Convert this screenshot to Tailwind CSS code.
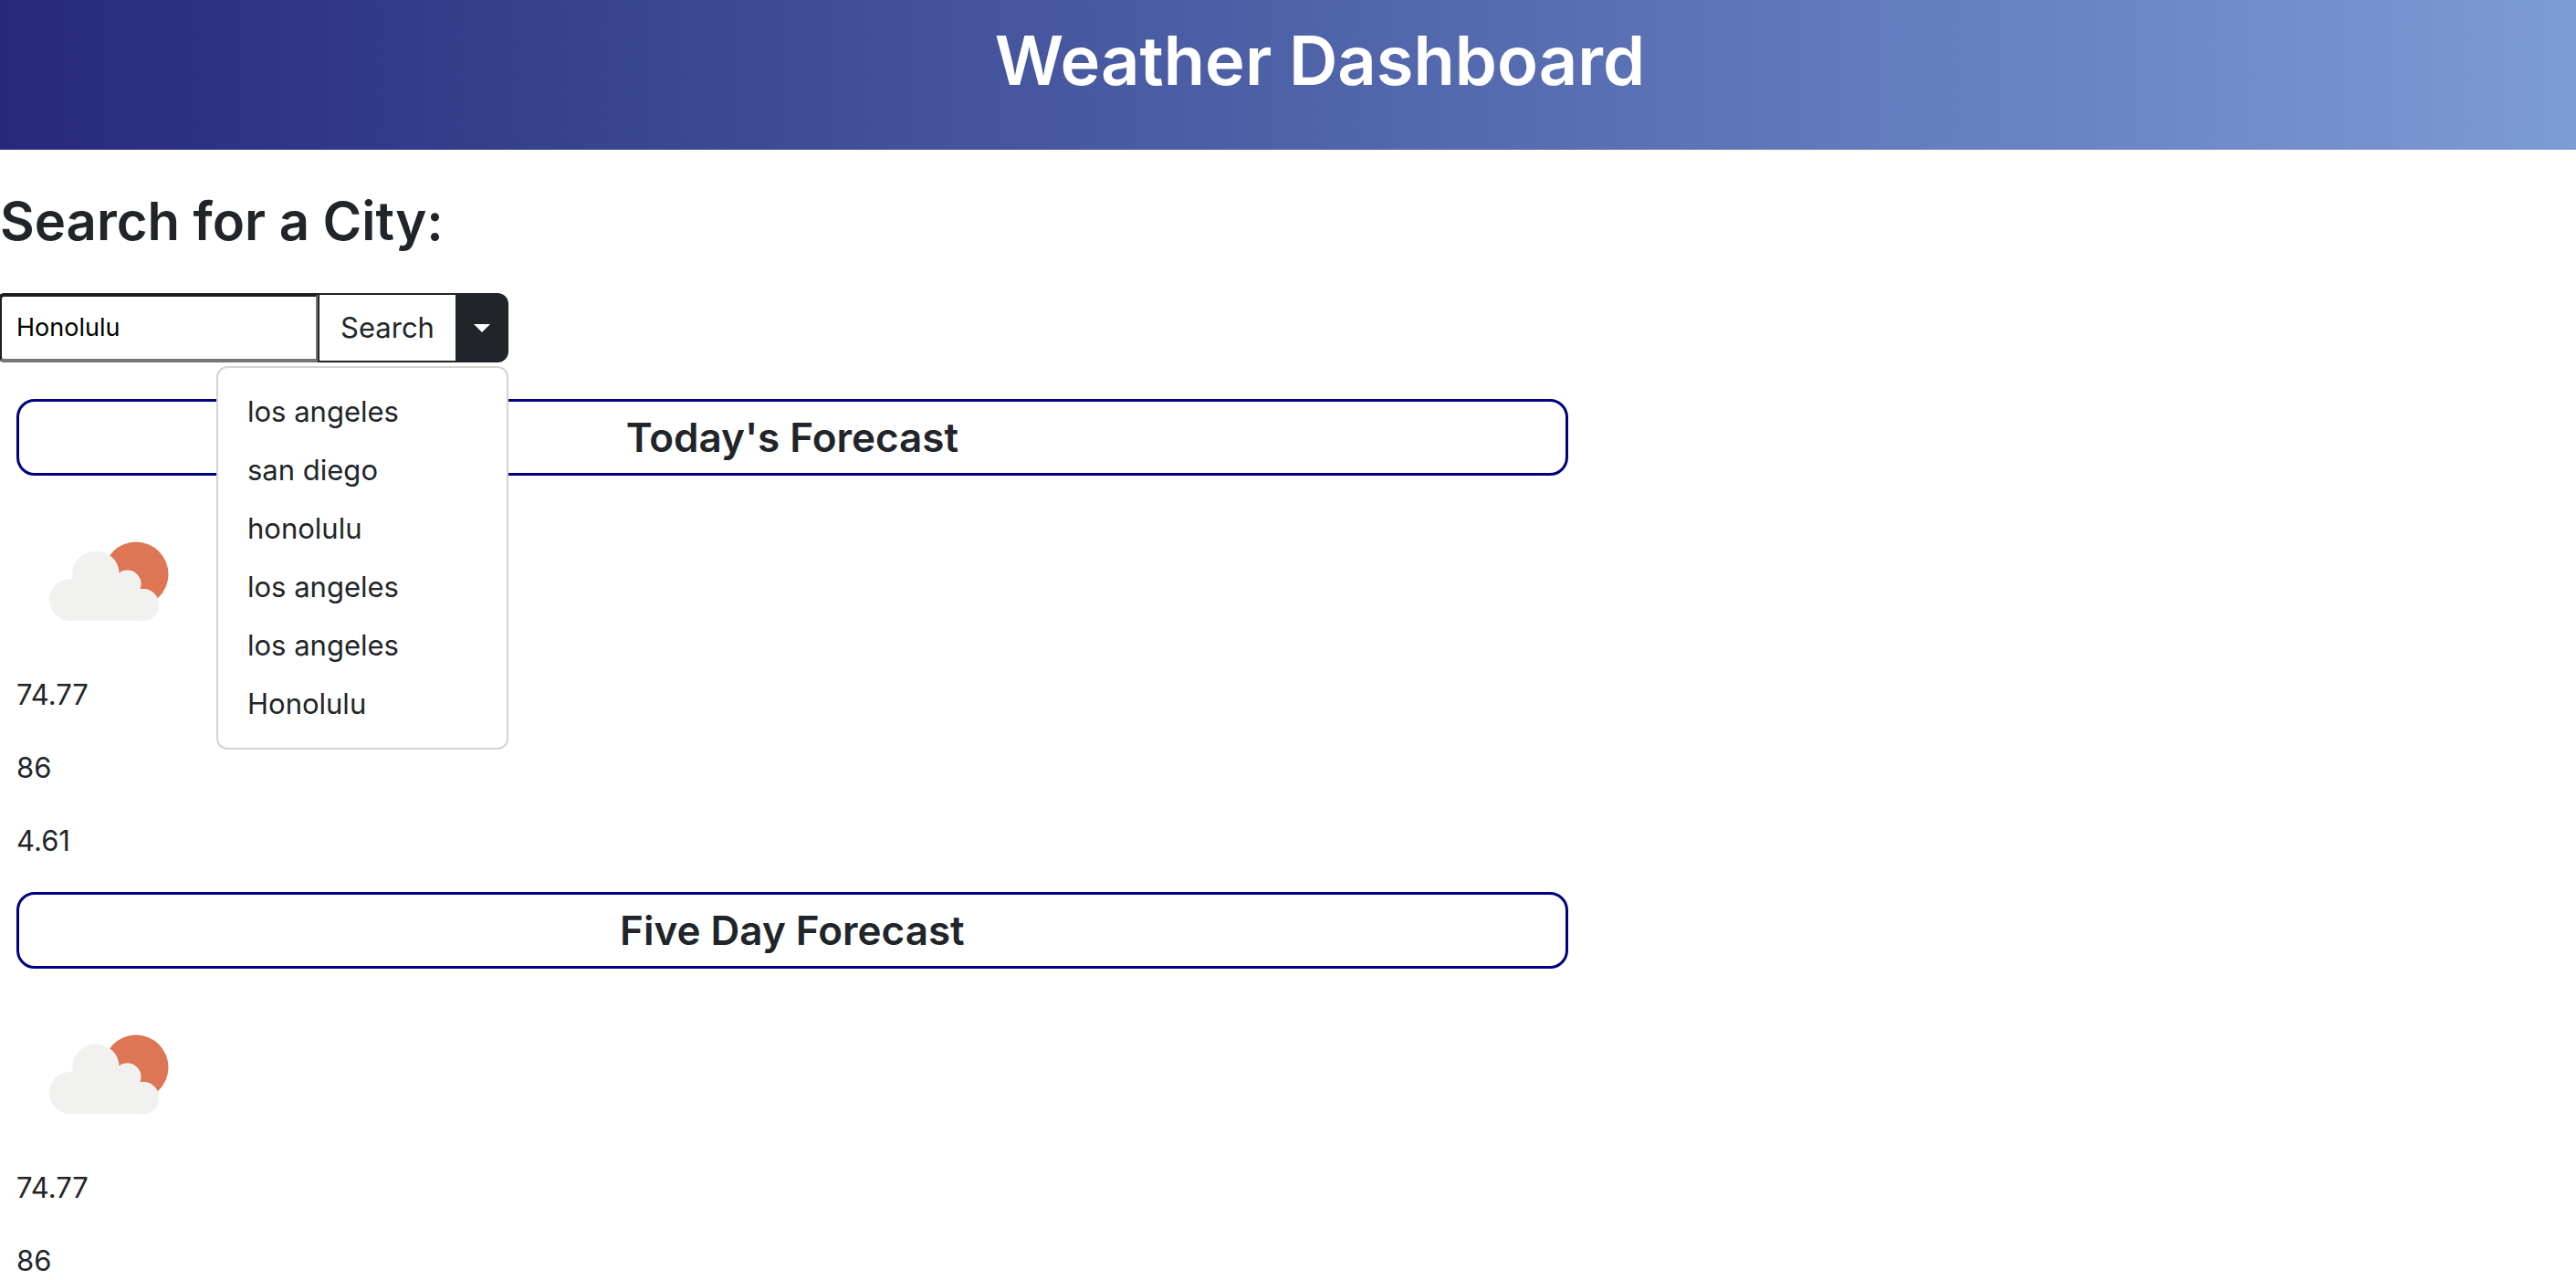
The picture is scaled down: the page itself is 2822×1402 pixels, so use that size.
<!DOCTYPE html>
<html lang="en">
<head>
<meta charset="utf-8">
<title>Weather Dashboard</title>
<script src="https://cdn.jsdelivr.net/npm/@tailwindcss/browser@4"></script>
</head>
<body class="h-screen overflow-hidden bg-white font-[Inter,sans-serif] text-[31px] leading-12 text-[#212529]">
<svg class="hidden" aria-hidden="true">
  <symbol id="few-clouds" viewBox="0 0 200 200">
    <circle cx="131" cy="92" r="35.500" fill="#dc7655"/>
    <g fill="#f1f1ef" stroke="#f8fafc" stroke-width="2">
      <circle cx="86.500" cy="92" r="25"/><circle cx="121.500" cy="102.500" r="14"/><circle cx="138.500" cy="126" r="17"/>
    </g>
    <g fill="#f1f1ef">
      <circle cx="59" cy="120" r="23"/><circle cx="86.500" cy="92" r="25"/><circle cx="121.500" cy="102.500" r="14"/><circle cx="138.500" cy="125.500" r="17.500"/>
      <path d="M59 97H62L86 80 111 95 122 100 135 108 145 126 139 143H59Z"/>
    </g>
  </symbol>
</svg>
<header class="bg-linear-to-r from-[#27297b] to-[#7d9bd5] pt-[18px] pb-[50px] pl-[70px] text-center text-white">
  <h1 class="text-[74px] leading-24 font-semibold">Weather Dashboard</h1>
</header>
<main>
  <h2 class="py-10 text-[58px] leading-[77px] font-semibold">Search for a City:</h2>
  <form class="relative z-10 flex h-[76px] w-fit">
    <input type="text" aria-label="City" value="Honolulu" class="-ml-0.5 w-[352px] rounded-l-md border-4 border-t-[#1e2020] border-r-[#767676] border-b-[#767676] border-l-[#1e2020] bg-white px-4 text-[27px] text-black outline-none">
    <button type="button" class="-ml-0.5 w-[153px] border-2 border-[#212529] bg-white">Search</button>
    <button type="button" aria-label="Recent cities" class="-ml-0.5 flex w-[58px] items-center justify-center rounded-r-xl bg-[#212529]">
      <svg class="h-[9px] w-[18px] fill-white" viewBox="0 0 18 9"><path d="M0 0H18L9 9Z"/></svg>
    </button>
    <ul class="absolute top-20 right-0 w-80 rounded-xl border-2 border-[#d3d3d3] bg-white py-4">
      <li><a href="#" class="block px-8 py-2">los angeles</a></li>
      <li><a href="#" class="block px-8 py-2">san diego</a></li>
      <li><a href="#" class="block px-8 py-2">honolulu</a></li>
      <li><a href="#" class="block px-8 py-2">los angeles</a></li>
      <li><a href="#" class="block px-8 py-2">los angeles</a></li>
      <li><a href="#" class="block px-8 py-2">Honolulu</a></li>
    </ul>
  </form>
  <div class="flex w-14/23 flex-col gap-8 pt-10 pl-[18px]">
    <section>
      <h3 class="mb-4 rounded-[20px] border-3 border-[#000080] py-[10px] text-center text-[44px] leading-[58px] font-semibold">Today's Forecast</h3>
      <svg class="size-[200px]" role="img" aria-label="Few clouds"><use href="#few-clouds"/></svg>
      <div class="flex flex-col gap-8"><p>74.77</p><p>86</p><p>4.61</p></div>
    </section>
    <section>
      <h3 class="mb-4 rounded-[20px] border-3 border-[#000080] py-[10px] text-center text-[44px] leading-[58px] font-semibold">Five Day Forecast</h3>
      <svg class="size-[200px]" role="img" aria-label="Few clouds"><use href="#few-clouds"/></svg>
      <div class="flex flex-col gap-8"><p>74.77</p><p>86</p></div>
    </section>
  </div>
</main>
</body>
</html>
